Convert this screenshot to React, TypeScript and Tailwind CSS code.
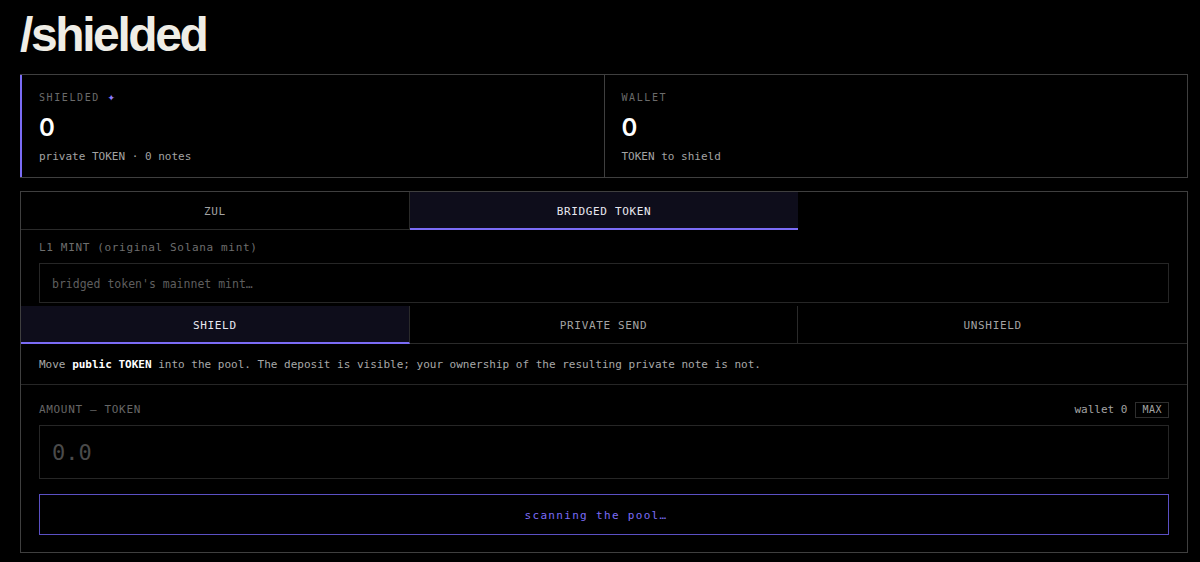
import { useState } from "react";

const mono = "font-['DejaVu_Sans_Mono','Liberation_Mono',monospace]";

export default function App() {
  const [asset, setAsset] = useState("bridged");
  const [mode, setMode] = useState("shield");
  const [mint, setMint] = useState("");
  const [amount, setAmount] = useState("");

  const assetTabs = [
    { id: "zul", label: "ZUL" },
    { id: "bridged", label: "BRIDGED TOKEN" },
  ];
  const modeTabs = [
    { id: "shield", label: "SHIELD" },
    { id: "send", label: "PRIVATE SEND" },
    { id: "unshield", label: "UNSHIELD" },
  ];

  return (
    <div className={`min-h-screen bg-black pt-[11px] pr-3 pb-4 pl-5 ${mono}`}>
      {/* Title */}
      <h1 className="mb-[15px] font-['Liberation_Sans',Arial,sans-serif] text-5xl font-bold leading-none tracking-tighter text-[#efede6]">
        /shielded
      </h1>

      {/* Balances */}
      <div className="grid grid-cols-2 border-y border-r border-[#3f3f3f]">
        <div className="border-l-2 border-[#7b6cf6] px-[17px] pt-4 pb-3">
          <div className="text-[10px] leading-[14px] tracking-[0.16em] text-[#6b6b6b]">
            SHIELDED{" "}
            <span className="font-['DejaVu_Sans',sans-serif] text-[9px] text-[#8b7cff]">✦</span>
          </div>
          <div className="mt-[9px] font-['Inter',sans-serif] text-2xl leading-[28px] font-semibold text-white">
            0
          </div>
          <div className="mt-[7px] text-[11px] leading-4 text-[#a3a3a3]">
            private TOKEN · 0 notes
          </div>
        </div>
        <div className="border-l border-[#3f3f3f] px-[17px] pt-4 pb-3">
          <div className="text-[10px] leading-[14px] tracking-[0.16em] text-[#6b6b6b]">WALLET</div>
          <div className="mt-[9px] font-['Inter',sans-serif] text-2xl leading-[28px] font-semibold text-white">
            0
          </div>
          <div className="mt-[7px] text-[11px] leading-4 text-[#a3a3a3]">TOKEN to shield</div>
        </div>
      </div>

      {/* Main panel */}
      <div className="mt-[13px] border border-[#3f3f3f]">
        {/* Asset tabs */}
        <div className="grid grid-cols-3">
          {assetTabs.map((t, i) => {
            const active = asset === t.id;
            return (
              <button
                key={t.id}
                onClick={() => setAsset(t.id)}
                className={`h-[38px] pt-1 text-[11px] tracking-[0.06em] ${
                  i === 0 ? "border-r border-r-[#2a2a2a]" : ""
                } ${
                  active
                    ? "border-b-2 border-b-[#7b6cf6] bg-[#0e0d1b] text-[#e8e8f0]"
                    : "border-b border-b-[#2a2a2a] text-[#a3a3a3]"
                }`}
              >
                {t.label}
              </button>
            );
          })}
        </div>

        {/* Mint */}
        <div className="px-[18px] pt-[10px] pb-[3px]">
          <div className="text-[11px] leading-4 tracking-[0.06em] text-[#6e6e6e]">
            L1 MINT (original Solana mint)
          </div>
          <input
            value={mint}
            onChange={(e) => setMint(e.target.value)}
            placeholder="bridged token's mainnet mint…"
            className="mt-[7px] block h-10 w-full border border-[#262626] bg-transparent px-3 pt-px text-[11.5px] text-[#d0d0d0] outline-none placeholder:text-[#5e5e5e]"
          />
        </div>

        {/* Mode tabs */}
        <div className="grid grid-cols-3">
          {modeTabs.map((t, i) => {
            const active = mode === t.id;
            return (
              <button
                key={t.id}
                onClick={() => setMode(t.id)}
                className={`h-[38px] pt-1 text-[11px] tracking-[0.06em] ${
                  i < 2 ? "border-r border-r-[#2a2a2a]" : ""
                } ${
                  active
                    ? "border-b-2 border-b-[#7b6cf6] bg-[#0e0d1b] text-[#e8e8f0]"
                    : "border-b border-b-[#2a2a2a] text-[#a3a3a3]"
                }`}
              >
                {t.label}
              </button>
            );
          })}
        </div>

        {/* Description */}
        <div className="border-b border-[#262626] px-[18px] pt-[13px] pb-[11px] text-[11px] leading-4 text-[#a8a8a8]">
          Move <span className="font-bold text-white">public TOKEN</span> into the pool. The deposit is
          visible; your ownership of the resulting private note is not.
        </div>

        {/* Amount */}
        <div className="px-[18px] pt-[17px] pb-[17px]">
          <div className="flex h-4 items-center justify-between">
            <span className="text-[11px] tracking-[0.06em] text-[#666666]">AMOUNT — TOKEN</span>
            <div className="flex items-center gap-2">
              <span className="text-[11px] text-[#a3a3a3]">wallet 0</span>
              <button className="h-4 border border-[#2e2e2e] px-[6px] text-[10px] leading-[14px] tracking-[0.05em] text-[#a3a3a3]">
                MAX
              </button>
            </div>
          </div>
          <input
            value={amount}
            onChange={(e) => setAmount(e.target.value)}
            placeholder="0.0"
            className="mt-[7px] block h-[54px] w-full border border-[#262626] bg-transparent px-3 text-[22px] text-[#d0d0d0] outline-none placeholder:text-[#4a4a4a]"
          />
          <button className="mt-[15px] block h-[41px] w-full border border-[#5b50c4] pt-1 pr-4 text-[11px] tracking-[0.12em] text-[#7b6cf6]">
            scanning the pool…
          </button>
        </div>
      </div>
    </div>
  );
}
